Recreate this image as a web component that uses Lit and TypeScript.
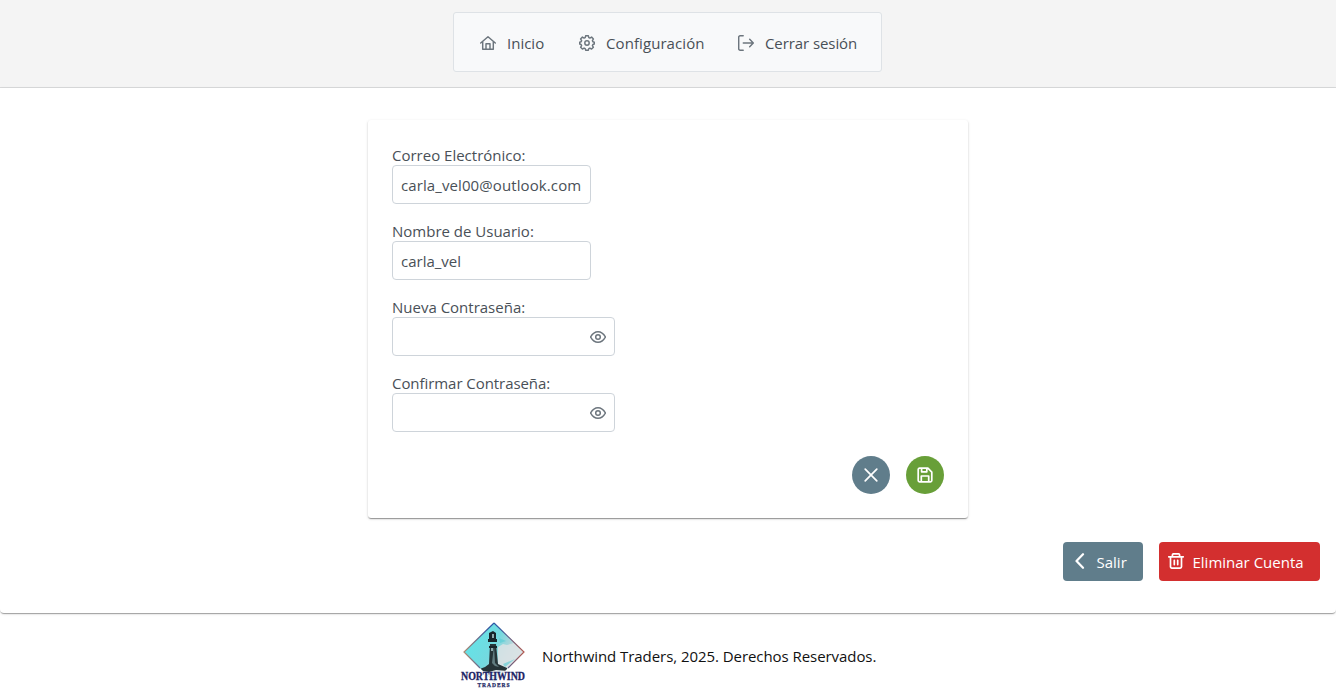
import { LitElement, html, css, svg } from "lit";
import { customElement } from "lit/decorators.js";

const icon = (body: unknown, cls = "") => html`<svg class="icon ${cls}" viewBox="0 0 16 16" aria-hidden="true">${body}</svg>`;

const home = svg`<path d="M.7 8 8 1.8 15.3 8M2.7 6.6v7.6h10.6V6.6M6 14V8.7h4V14"/>`;
const cog = svg`<path d="M6.7.7h2.6l.5 1.9 1.1.5 1.7-1 1.8 1.8-1 1.7.5 1.1 1.4.5V9l-1.4.5-.5 1.1 1 1.7-1.8 1.8-1.7-1-1.1.5-.5 1.7H6.7l-.5-1.7-1.1-.5-1.7 1-1.8-1.8 1-1.7-.5-1.1L.7 9V7.2l1.4-.5.5-1.1-1-1.7 1.8-1.8 1.7 1 1.1-.5z"/><circle cx="8" cy="8" r="2.2"/>`;
const signOut = svg`<path d="M5.2.8H2.1A1.4 1.4 0 0 0 .7 2.2v11.6a1.4 1.4 0 0 0 1.4 1.4h3.1M5.3 8h9.9M11.7 4.3 15.3 8l-3.6 3.7"/>`;
const eye = svg`<path d="M.6 8C2.4 4.8 4.9 2.8 8 2.8S13.6 4.8 15.4 8c-1.8 3.2-4.3 5.2-7.4 5.2S2.4 11.2.6 8z"/><circle cx="8" cy="8" r="2.3"/>`;
const times = svg`<path d="m2.2 2.2 11.6 11.6M13.8 2.2 2.2 13.8"/>`;
const save = svg`<path d="M2.5 1.2h8.4l3.9 3.9v8.4a1.3 1.3 0 0 1-1.3 1.3h-11a1.3 1.3 0 0 1-1.3-1.3v-11a1.3 1.3 0 0 1 1.3-1.3zM4.3 14.6V9h7.4v5.6M4.6 1.4v3.4h5.2V1.4"/>`;
const chevron = svg`<path d="M11 1.2 4.5 8l6.5 6.8"/>`;
const trash = svg`<path d="M.7 3.8h14.6M4.4 3.6V2A1.2 1.2 0 0 1 5.6.8h4.8A1.2 1.2 0 0 1 11.6 2v1.6M2.5 4v9.8a1.3 1.3 0 0 0 1.3 1.3h8.4a1.3 1.3 0 0 0 1.3-1.3V4M6.3 7.3v4.3M9.7 7.3v4.3"/>`;

@customElement("nw-logo")
export class NwLogo extends LitElement {
  static styles = css`
    :host { display: block; width: 66px; height: 66px; }
    .art { display: block; width: 66px; height: 66px; overflow: visible; }
    .name { font: bold 11.5px "Liberation Serif", serif; fill: #1d2466; stroke: #1d2466; stroke-width: .3; }
    .sub { font: bold 5.5px "Liberation Serif", serif; fill: #252b66; stroke: #252b66; stroke-width: .25; }
  `;
  render() {
    return html`<svg class="art" viewBox="0 0 66 66" role="img" aria-label="Northwind Traders">
      <defs>
        <clipPath id="d"><path d="M34 1 64 30 34 60 4 30z"/></clipPath>
        <linearGradient id="sky" x1="0" x2="1" y1=".2" y2=".7">
          <stop offset="0" stop-color="#5fe6ea"/><stop offset=".48" stop-color="#74d9df"/>
          <stop offset=".7" stop-color="#b5d5da"/><stop offset="1" stop-color="#dce4e6"/>
        </linearGradient>
        <linearGradient id="rim" x1="0" x2="1">
          <stop offset="0" stop-color="#b08a72"/><stop offset=".45" stop-color="#2b55a5"/>
          <stop offset=".6" stop-color="#315da0"/><stop offset="1" stop-color="#b55a50"/>
        </linearGradient>
      </defs>
      <g clip-path="url(#d)">
        <path d="M34 0 65 30 34 61 3 30z" fill="url(#sky)"/>
        <path d="m38 25 5-3 4 1 7-2 10 10-17 18-9-2z" fill="#dce3e5" opacity=".85"/>
        <path d="m39 16 7 3-6 2zm4 26 12-5-10 8z" fill="#55cbd3" opacity=".6"/>
        <path d="M4 47h60v13H4z" fill="#e8eff1"/>
        <path d="m17 48 8-3 4-3 1-20h6l2 20 9 4 1 3-12-1-7 2z" fill="#263438"/>
        <path d="m34 23 1 18 4 4-4-1-3-3z" fill="#617c80"/>
        <path d="M28 20v-3h1v-6l4-2 3 2v6h1v3zM29 24h8v2h-8z" fill="#17252b"/>
        <path d="M32 12h2v4h-2zm-1 14h2v3h-2z" fill="#8ca9ad"/>
      </g>
      <path d="M34 1 64 30 48 46M34 1 4 30l16 16" fill="none" stroke="url(#rim)" stroke-width="1.2"/>
      <text class="name" x="1" y="57.8" textLength="64" lengthAdjust="spacingAndGlyphs">NORTHWIND</text>
      <text class="sub" x="17.5" y="64.6" textLength="32" lengthAdjust="spacing">TRADERS</text>
    </svg>`;
  }
}

@customElement("app-root")
export class AppRoot extends LitElement {
  static styles = css`
    :host {
      display: block; height: 698px; overflow: hidden; background: #fff; color: #495057;
      font: 15px/24px "Open Sans", "Noto Sans", sans-serif;
    }
    * { box-sizing: border-box; }
    .header { height: 88px; padding-top: 12px; display: flex; justify-content: center; align-items: flex-start; background: #f4f4f4; border-bottom: 1px solid #d9dadb; }
    .menu { width: 429px; height: 60px; margin-right: 1px; padding: 2px 0 0 26px; display: flex; align-items: center; background: #f8f9fa; border: 1px solid #dee2e6; border-radius: 3px; }
    .item { display: flex; align-items: center; gap: 11px; white-space: nowrap; flex: none; }
    .first { width: 99px; }
    .second { width: 159px; letter-spacing: .08px; }
    .third { letter-spacing: -.08px; }
    .icon { display: block; flex: none; width: 16px; height: 16px; fill: none; stroke: #6c757d; stroke-width: 1.45; stroke-linecap: round; stroke-linejoin: round; }
    .main { height: 525px; padding-top: 32px; border-radius: 0 0 4px 4px; box-shadow: 0 2px 1px -1px rgba(0,0,0,.2), 0 1px 1px rgba(0,0,0,.14), 0 1px 3px rgba(0,0,0,.12); }
    .card { width: 600px; height: 398px; margin: 0 auto; padding: 24px; border-radius: 3px; box-shadow: 0 2px 1px -1px rgba(0,0,0,.2), 0 1px 1px rgba(0,0,0,.18), 0 1px 3px rgba(0,0,0,.16); }
    .field { height: 76px; display: flex; flex-direction: column; align-items: flex-start; }
    .label { height: 21px; line-height: 22px; white-space: nowrap; }
    .label.tight { letter-spacing: -.06px; }
    .box { width: 199px; height: 39px; padding: 0 8px; display: flex; align-items: center; border: 1px solid #ced4da; border-radius: 4px; white-space: nowrap; }
    .mail { letter-spacing: .1px; }
    .password { width: 223px; justify-content: flex-end; padding: 1px 8px 0 0; }
    .t { display: block; }
    .round-row { display: flex; justify-content: flex-end; gap: 16px; padding-top: 8px; }
    .round { width: 38px; height: 38px; border: 0; padding: 0; border-radius: 50%; display: flex; align-items: center; justify-content: center; background: #607d8b; }
    .ok { background: #689f38; }
    .light { stroke: #fff; stroke-width: 1.7; }
    .thick { stroke-width: 2.2; }
    .actions { display: flex; justify-content: flex-end; gap: 16px; padding: 24px 16px 0 0; }
    .btn { height: 39px; border: 0; border-radius: 4px; padding: 0 0 0 9px; display: flex; align-items: center; gap: 8.5px; font: inherit; color: #fff; background: #607d8b; white-space: nowrap; }
    .btn .icon { margin-top: -1px; }
    .exit { width: 80px; }
    .delete { width: 161px; background: #d32f2f; }
    .footer { height: 85px; padding: 9px 0 0 460px; display: flex; align-items: flex-start; gap: 16px; color: #111; }
    .copy { padding-top: 22px; white-space: nowrap; letter-spacing: -.06px; }
  `;

  render() {
    return html`
      <header class="header"><nav class="menu">
        <span class="item first">${icon(home)}<span class="t">Inicio</span></span>
        <span class="item second">${icon(cog)}<span class="t">Configuración</span></span>
        <span class="item third">${icon(signOut)}<span class="t">Cerrar sesión</span></span>
      </nav></header>
      <main class="main">
        <section class="card">
          <div class="field"><span class="label">Correo Electrónico:</span><div class="box mail"><span class="t">carla_vel00@outlook.com</span></div></div>
          <div class="field"><span class="label">Nombre de Usuario:</span><div class="box"><span class="t">carla_vel</span></div></div>
          <div class="field"><span class="label">Nueva Contraseña:</span><div class="box password">${icon(eye)}</div></div>
          <div class="field"><span class="label tight">Confirmar Contraseña:</span><div class="box password">${icon(eye)}</div></div>
          <div class="round-row">
            <button class="round" aria-label="Cancelar">${icon(times, "light")}</button>
            <button class="round ok" aria-label="Guardar">${icon(save, "light")}</button>
          </div>
        </section>
        <div class="actions">
          <button class="btn exit">${icon(chevron, "light thick")}<span class="t">Salir</span></button>
          <button class="btn delete">${icon(trash, "light")}<span class="t">Eliminar Cuenta</span></button>
        </div>
      </main>
      <footer class="footer"><nw-logo></nw-logo><span class="copy">Northwind Traders, 2025. Derechos Reservados.</span></footer>
    `;
  }
}
